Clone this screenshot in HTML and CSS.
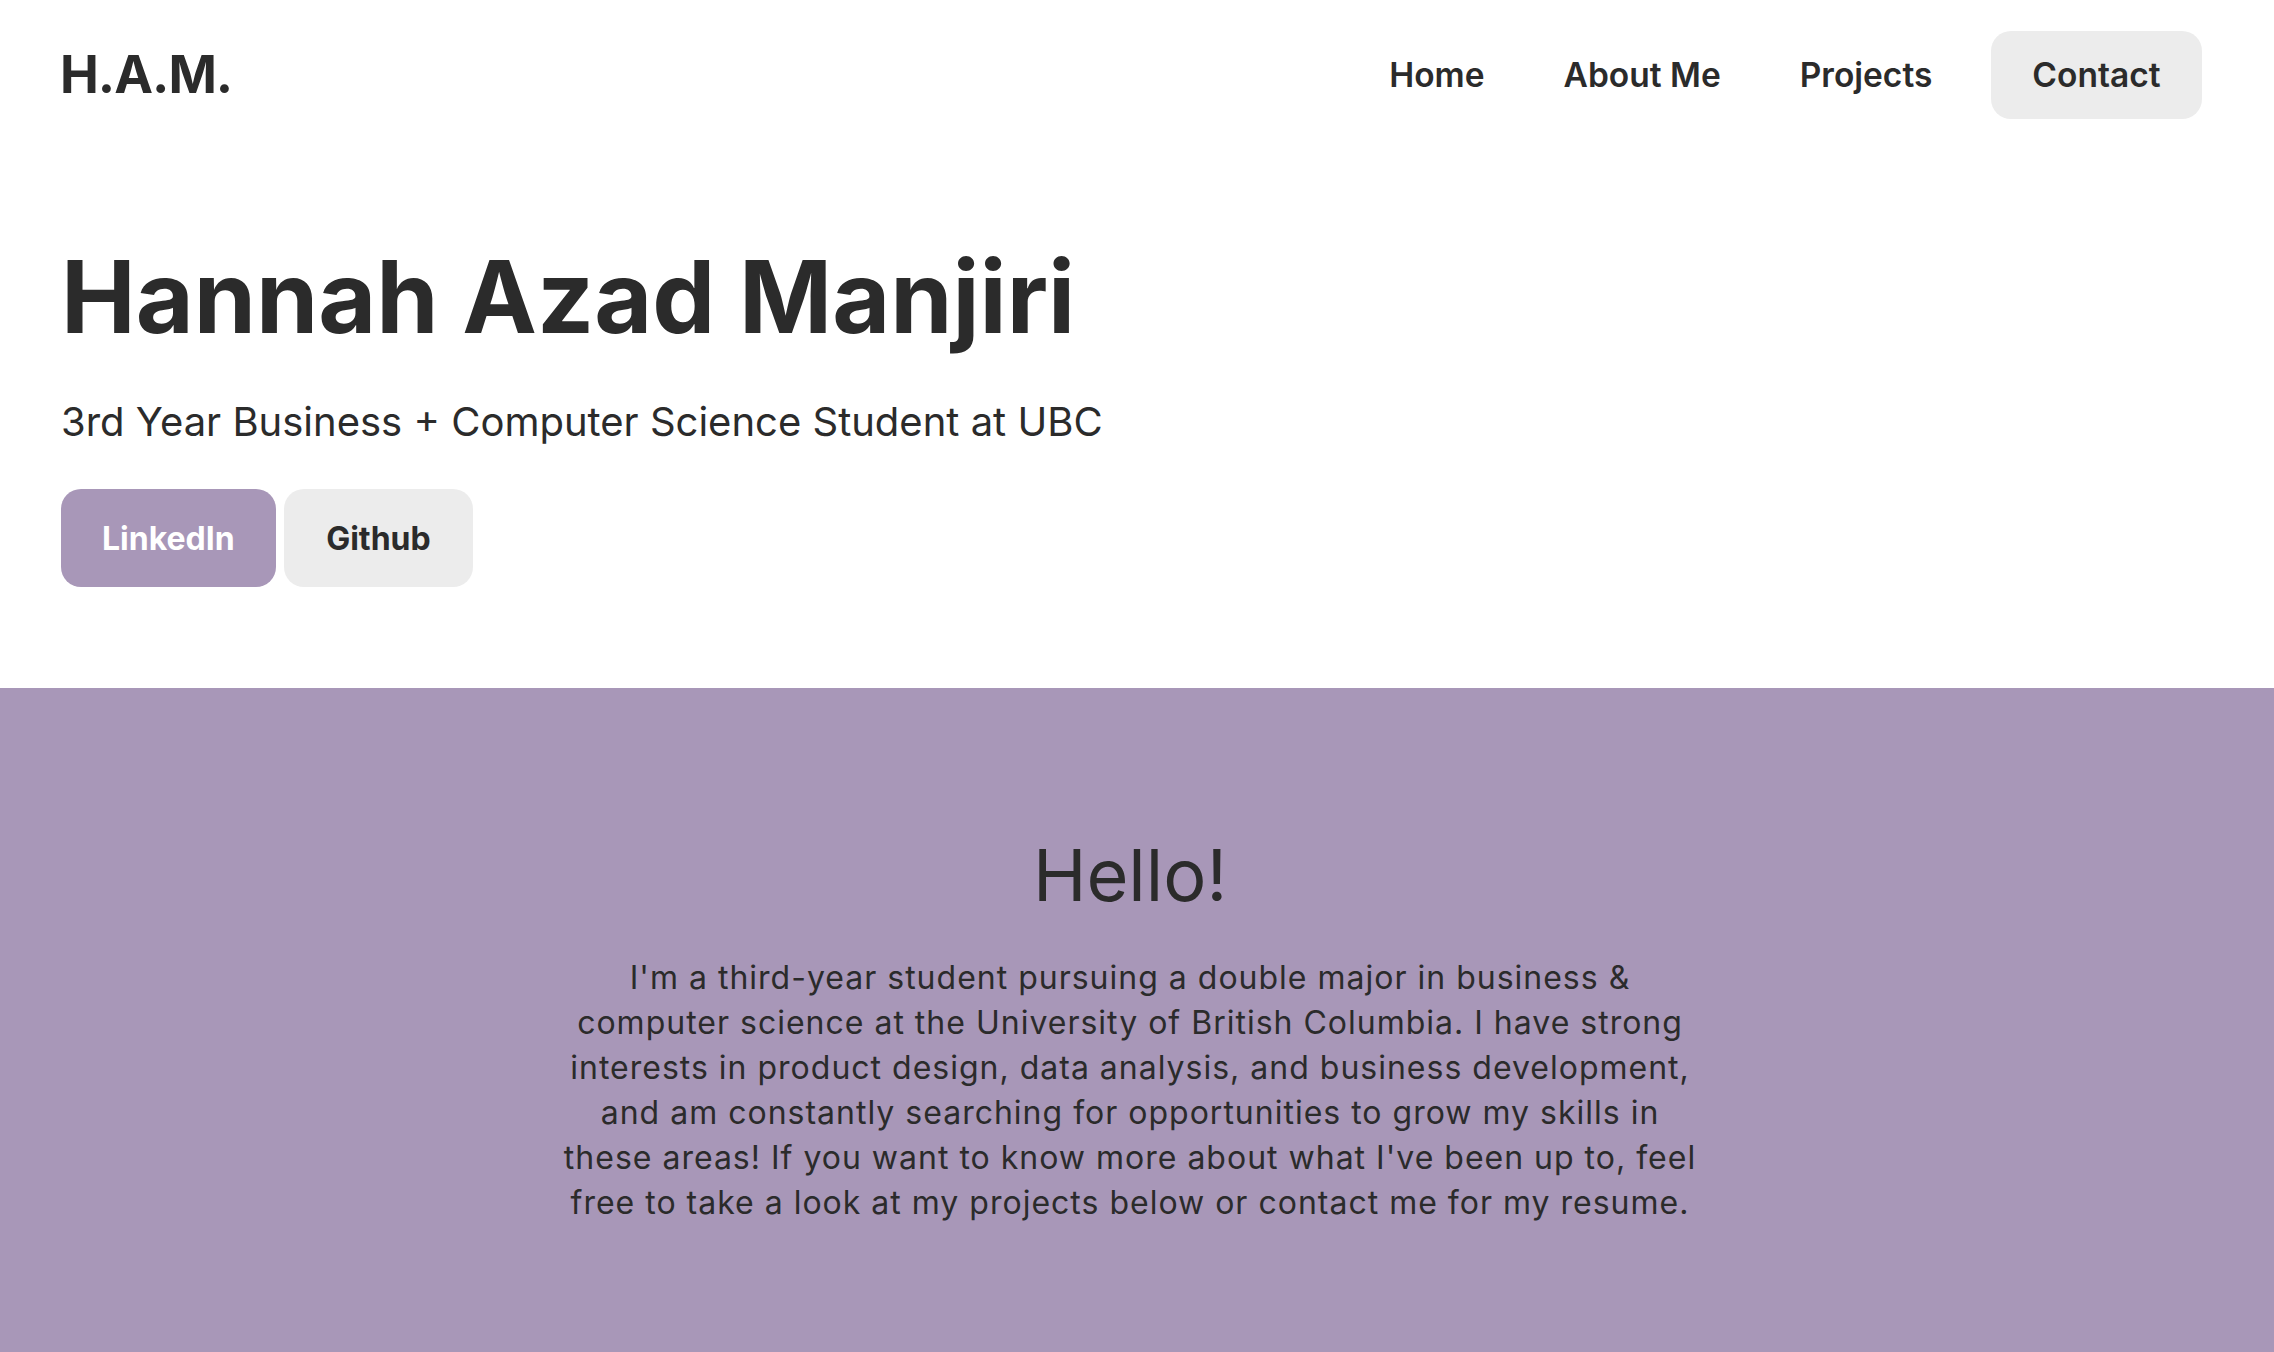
FILE: index.html
```html
<!DOCTYPE html>
<html lang="en">
<head>
<meta charset="utf-8">
<title>H.A.M.</title>
<link rel="stylesheet" href="styles.css">
</head>
<body>
<header class="site-header">
  <a class="logo" href="#">H.A.M.</a>
  <nav class="nav">
    <a class="nav-link" href="#">Home</a>
    <a class="nav-link" href="#">About Me</a>
    <a class="nav-link" href="#">Projects</a>
    <a class="nav-link nav-contact" href="#">Contact</a>
  </nav>
</header>
<main>
  <section class="hero">
    <h1 class="hero-title">Hannah Azad Manjiri</h1>
    <p class="hero-subtitle">3rd Year Business + Computer Science Student at UBC</p>
    <div class="hero-buttons">
      <a class="btn btn-primary" href="#">LinkedIn</a>
      <a class="btn btn-secondary" href="#">Github</a>
    </div>
  </section>
  <section class="about">
    <h2 class="about-title">Hello!</h2>
    <p class="about-text">I'm a third-year student pursuing a double major in business &amp;<br>
computer science at the University of British Columbia. I have strong<br>
interests in product design, data analysis, and business development,<br>
and am constantly searching for opportunities to grow my skills in<br>
these areas! If you want to know more about what I've been up to, feel<br>
free to take a look at my projects below or contact me for my resume.</p>
  </section>
</main>
</body>
</html>
```
FILE: styles.css
```css
* { box-sizing: border-box; }

html, body {
  margin: 0;
  padding: 0;
}

body {
  font-family: "Inter", "Open Sans", sans-serif;
  color: #2b2b2b;
  background: #ffffff;
}

a {
  color: inherit;
  text-decoration: none;
}

.site-header {
  display: flex;
  justify-content: space-between;
  align-items: center;
  padding: 31px 72px 0 60px;
}

.logo {
  font-size: 52px;
  font-weight: 700;
  letter-spacing: -1px;
  line-height: 1.21;
}

.nav {
  display: flex;
  align-items: center;
}

.nav-link {
  display: flex;
  align-items: center;
  height: 88px;
  padding: 0 39.5px;
  font-size: 33.5px;
  font-weight: 600;
}

.nav-contact {
  margin-left: 19px;
  padding: 0 41.5px;
  background: #ececec;
  border-radius: 20px;
}

.hero {
  padding: 118px 61px 101px;
}

.hero-title {
  margin: 0;
  font-size: 100px;
  font-weight: 700;
  line-height: 1.2;
}

.hero-subtitle {
  margin: 35px 0 37px;
  font-size: 40px;
  font-weight: 400;
  line-height: 1.5;
}

.hero-buttons {
  display: flex;
  gap: 8px;
}

.btn {
  display: flex;
  align-items: center;
  height: 98px;
  padding: 0 41px;
  border-radius: 20px;
  font-size: 32px;
  font-weight: 700;
}

.btn-secondary {
  padding: 0 42.5px;
}

.btn-primary {
  background: #a897b8;
  color: #ffffff;
}

.btn-secondary {
  background: #ececec;
  color: #2b2b2b;
}

.about {
  background: #a897b8;
  padding: 144px 14px 160px 0;
  text-align: center;
}

.about-title {
  margin: 0;
  font-size: 72px;
  font-weight: 400;
  line-height: 1.2;
}

.about-text {
  margin: 37px auto 0;
  max-width: 1300px;
  font-size: 32px;
  letter-spacing: 1px;
  line-height: 45px;
}
```
